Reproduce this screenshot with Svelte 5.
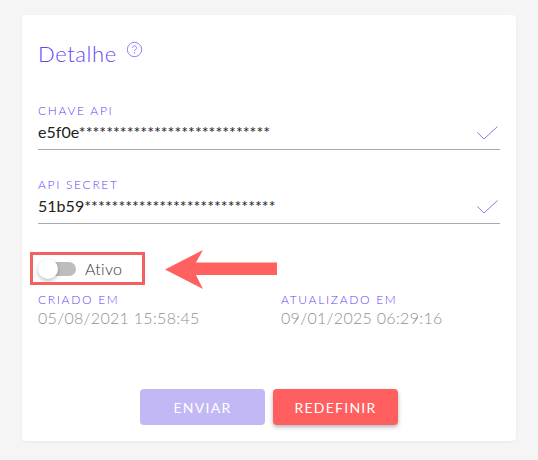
<script>
  const fields = [
    { label: 'CHAVE API', value: 'e5f0e****************************' },
    { label: 'API SECRET', value: '51b59****************************' }
  ];
  const dates = [
    { label: 'CRIADO EM', value: '05/08/2021 15:58:45' },
    { label: 'ATUALIZADO EM', value: '09/01/2025 06:29:16' }
  ];
</script>

<main class="page">
  <section class="card">
    <header class="head">
      <h1>Detalhe</h1>
      <svg class="help" viewBox="0 0 18 18" width="17" height="17" fill="none" stroke="#8c75f5" stroke-width="1">
        <circle cx="9" cy="9" r="7.6" />
        <path d="M6.9 7.2a2.100 2.100 0 1 1 3.200 1.800c-.7.4-1.100.8-1.100 1.600" />
        <circle cx="9" cy="12.600" r=".4" />
      </svg>
    </header>

    {#each fields as f}
      <div class="field">
        <span class="label">{f.label}</span>
        <div class="value-row">
          <span class="value">{f.value}</span>
          <svg class="check" viewBox="0 0 21 14" width="21" height="14" fill="none" stroke="#8c75f5" stroke-width="1">
            <path d="M.4 6.500 7 13 20.500.5" />
          </svg>
        </div>
      </div>
    {/each}

    <div class="toggle-row">
      <span class="switch"><span class="track"></span><span class="thumb"></span></span>
      <span class="toggle-label">Ativo</span>
      <span class="highlight"></span>
    </div>

    <div class="dates">
      {#each dates as d}
        <div class="date">
          <span class="label">{d.label}</span>
          <span class="date-value">{d.value}</span>
        </div>
      {/each}
    </div>

    <div class="actions">
      <button class="btn send" type="button">ENVIAR</button>
      <button class="btn reset" type="button">REDEFINIR</button>
    </div>

    <svg class="arrow" viewBox="0 0 112 40" width="112" height="40">
      <path d="M0 19.500 38 0 31 12.500H112V25H31L38 39Z" fill="#ff6060" />
    </svg>
  </section>
</main>

<style>
  :global(body) {
    margin: 0;
    background: #f5f5f5;
  }
  .page {
    width: 538px;
    height: 460px;
    padding: 15px 22px 0;
    box-sizing: border-box;
    font-family: "Lato", "Noto Sans", sans-serif;
  }
  .card {
    position: relative;
    width: 494px;
    height: 426px;
    box-sizing: border-box;
    padding: 26px 16px 0;
    background: #fff;
    border-radius: 4px;
    box-shadow: 0 1px 3px rgba(0, 0, 0, 0.06);
  }
  .head {
    display: flex;
    align-items: flex-start;
    gap: 9px;
    height: 63px;
  }
  h1 {
    margin: 0;
    font-size: 22px;
    line-height: 26px;
    font-weight: 300;
    letter-spacing: 0.6px;
    color: #6248f5;
  }
  .help {
    flex: none;
  }
  .field {
    height: 74px;
    display: flex;
    flex-direction: column;
  }
  .label {
    font-size: 12px;
    line-height: 14px;
    font-weight: 300;
    letter-spacing: 1.7px;
    color: #5f45f5;
  }
  .value-row {
    display: flex;
    justify-content: space-between;
    align-items: flex-end;
    height: 32px;
    padding: 0 2px 8px 0;
    border-bottom: 1px solid #aaa;
    box-sizing: border-box;
    width: 462px;
  }
  .value {
    font-size: 16px;
    line-height: 18px;
    color: #222;
    letter-spacing: 0.03px;
  }
  .check {
    margin-bottom: 1px;
  }
  .toggle-row {
    position: relative;
    display: flex;
    align-items: center;
    height: 33px;
  }
  .switch {
    position: relative;
    width: 38px;
    height: 20px;
    flex: none;
  }
  .track {
    position: absolute;
    left: 2px;
    top: 3px;
    width: 36px;
    height: 14px;
    border-radius: 7px;
    background: #bdbdbd;
  }
  .thumb {
    position: absolute;
    left: 0;
    top: 0;
    width: 20px;
    height: 20px;
    border-radius: 50%;
    background: #fff;
    box-shadow: 0 2px 4px rgba(0, 0, 0, 0.25);
  }
  .toggle-label {
    margin-left: 9px;
    font-size: 16px;
    font-weight: 300;
    color: #333;
    letter-spacing: 0.3px;
  }
  .highlight {
    position: absolute;
    left: -8px;
    top: 0;
    width: 115px;
    height: 33px;
    box-sizing: border-box;
    border: 3px solid #f26060;
  }
  .dates {
    display: grid;
    grid-template-columns: 243px 1fr;
    margin-top: 8px;
  }
  .date {
    display: flex;
    flex-direction: column;
    gap: 2px;
  }
  .date-value {
    font-size: 16px;
    line-height: 18px;
    font-weight: 300;
    color: #8f8f8f;
    letter-spacing: 0.3px;
  }
  .actions {
    position: absolute;
    left: 118px;
    top: 374px;
    display: flex;
    gap: 8px;
  }
  .btn {
    width: 125px;
    height: 36px;
    border: 0;
    border-radius: 4px;
    color: #fff;
    font-family: inherit;
    font-size: 14px;
    letter-spacing: 1.25px;
  }
  .send {
    background: #c3b8f6;
  }
  .reset {
    background: #ff5f5f;
    box-shadow: 0 2px 4px rgba(0, 0, 0, 0.3);
  }
  .arrow {
    position: absolute;
    left: 143px;
    top: 235px;
  }
</style>
